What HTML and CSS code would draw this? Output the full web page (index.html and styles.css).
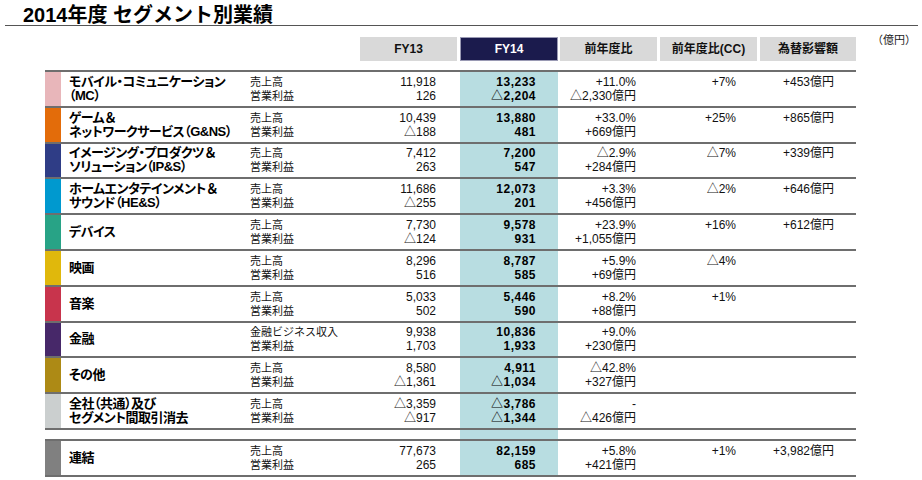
FILE: index.html
```html
<!DOCTYPE html>
<html lang="ja">
<head>
<meta charset="utf-8">
<title>2014年度 セグメント別業績</title>
<link rel="stylesheet" href="styles.css">
</head>
<body>
<div class="page">
  <div class="title-bar"><h1 class="title">2014年度 セグメント別業績</h1></div>

  <div class="head-row">
    <div class="hcell hcell-first">FY13</div>
    <div class="hcell hcell-current">FY14</div>
    <div class="hcell">前年度比</div>
    <div class="hcell">前年度比(CC)</div>
    <div class="hcell hcell-last">為替影響額</div>
    <div class="unit">（億円）</div>
  </div>

  <div class="table">
    <div class="row">
      <div class="bar bar-mc"></div>
      <div class="seg"><span>モバイル・コミュニケーション</span><span>（MC）</span></div>
      <div class="sub"><span>売上高</span><span>営業利益</span></div>
      <div class="num"><span>11,918</span><span>126</span></div>
      <div class="num cur"><span>13,233</span><span>△2,204</span></div>
      <div class="num"><span>+11.0%</span><span>△2,330億円</span></div>
      <div class="num"><span>+7%</span><span>&nbsp;</span></div>
      <div class="num fx"><span>+453億円</span><span>&nbsp;</span></div>
    </div>
    <div class="row">
      <div class="bar bar-gns"></div>
      <div class="seg"><span>ゲーム<span class="amp">＆</span></span><span>ネットワークサービス（G&amp;NS）</span></div>
      <div class="sub"><span>売上高</span><span>営業利益</span></div>
      <div class="num"><span>10,439</span><span>△188</span></div>
      <div class="num cur"><span>13,880</span><span>481</span></div>
      <div class="num"><span>+33.0%</span><span>+669億円</span></div>
      <div class="num"><span>+25%</span><span>&nbsp;</span></div>
      <div class="num fx"><span>+865億円</span><span>&nbsp;</span></div>
    </div>
    <div class="row">
      <div class="bar bar-ips"></div>
      <div class="seg"><span>イメージング・プロダクツ<span class="amp">＆</span></span><span>ソリューション（IP&amp;S）</span></div>
      <div class="sub"><span>売上高</span><span>営業利益</span></div>
      <div class="num"><span>7,412</span><span>263</span></div>
      <div class="num cur"><span>7,200</span><span>547</span></div>
      <div class="num"><span>△2.9%</span><span>+284億円</span></div>
      <div class="num"><span>△7%</span><span>&nbsp;</span></div>
      <div class="num fx"><span>+339億円</span><span>&nbsp;</span></div>
    </div>
    <div class="row">
      <div class="bar bar-hes"></div>
      <div class="seg"><span>ホームエンタテインメント<span class="amp">＆</span></span><span>サウンド（HE&amp;S）</span></div>
      <div class="sub"><span>売上高</span><span>営業利益</span></div>
      <div class="num"><span>11,686</span><span>△255</span></div>
      <div class="num cur"><span>12,073</span><span>201</span></div>
      <div class="num"><span>+3.3%</span><span>+456億円</span></div>
      <div class="num"><span>△2%</span><span>&nbsp;</span></div>
      <div class="num fx"><span>+646億円</span><span>&nbsp;</span></div>
    </div>
    <div class="row">
      <div class="bar bar-dev"></div>
      <div class="seg"><span>デバイス</span></div>
      <div class="sub"><span>売上高</span><span>営業利益</span></div>
      <div class="num"><span>7,730</span><span>△124</span></div>
      <div class="num cur"><span>9,578</span><span>931</span></div>
      <div class="num"><span>+23.9%</span><span>+1,055億円</span></div>
      <div class="num"><span>+16%</span><span>&nbsp;</span></div>
      <div class="num fx"><span>+612億円</span><span>&nbsp;</span></div>
    </div>
    <div class="row">
      <div class="bar bar-mov"></div>
      <div class="seg"><span>映画</span></div>
      <div class="sub"><span>売上高</span><span>営業利益</span></div>
      <div class="num"><span>8,296</span><span>516</span></div>
      <div class="num cur"><span>8,787</span><span>585</span></div>
      <div class="num"><span>+5.9%</span><span>+69億円</span></div>
      <div class="num"><span>△4%</span><span>&nbsp;</span></div>
      <div class="num fx"><span>&nbsp;</span><span>&nbsp;</span></div>
    </div>
    <div class="row">
      <div class="bar bar-mus"></div>
      <div class="seg"><span>音楽</span></div>
      <div class="sub"><span>売上高</span><span>営業利益</span></div>
      <div class="num"><span>5,033</span><span>502</span></div>
      <div class="num cur"><span>5,446</span><span>590</span></div>
      <div class="num"><span>+8.2%</span><span>+88億円</span></div>
      <div class="num"><span>+1%</span><span>&nbsp;</span></div>
      <div class="num fx"><span>&nbsp;</span><span>&nbsp;</span></div>
    </div>
    <div class="row">
      <div class="bar bar-fin"></div>
      <div class="seg"><span>金融</span></div>
      <div class="sub"><span>金融ビジネス収入</span><span>営業利益</span></div>
      <div class="num"><span>9,938</span><span>1,703</span></div>
      <div class="num cur"><span>10,836</span><span>1,933</span></div>
      <div class="num"><span>+9.0%</span><span>+230億円</span></div>
      <div class="num"><span>&nbsp;</span><span>&nbsp;</span></div>
      <div class="num fx"><span>&nbsp;</span><span>&nbsp;</span></div>
    </div>
    <div class="row">
      <div class="bar bar-oth"></div>
      <div class="seg"><span>その他</span></div>
      <div class="sub"><span>売上高</span><span>営業利益</span></div>
      <div class="num"><span>8,580</span><span>△1,361</span></div>
      <div class="num cur"><span>4,911</span><span>△1,034</span></div>
      <div class="num"><span>△42.8%</span><span>+327億円</span></div>
      <div class="num"><span>&nbsp;</span><span>&nbsp;</span></div>
      <div class="num fx"><span>&nbsp;</span><span>&nbsp;</span></div>
    </div>
    <div class="row row-end">
      <div class="bar bar-corp"></div>
      <div class="seg"><span>全社（共通）及び</span><span>セグメント間取引消去</span></div>
      <div class="sub"><span>売上高</span><span>営業利益</span></div>
      <div class="num"><span>△3,359</span><span>△917</span></div>
      <div class="num cur"><span>△3,786</span><span>△1,344</span></div>
      <div class="num"><span>-</span><span>△426億円</span></div>
      <div class="num"><span>&nbsp;</span><span>&nbsp;</span></div>
      <div class="num fx"><span>&nbsp;</span><span>&nbsp;</span></div>
    </div>
    <div class="spacer">
      <div class="spacer-cur"></div>
    </div>
    <div class="row row-end">
      <div class="bar bar-total"></div>
      <div class="seg"><span>連結</span></div>
      <div class="sub"><span>売上高</span><span>営業利益</span></div>
      <div class="num"><span>77,673</span><span>265</span></div>
      <div class="num cur"><span>82,159</span><span>685</span></div>
      <div class="num"><span>+5.8%</span><span>+421億円</span></div>
      <div class="num"><span>+1%</span><span>&nbsp;</span></div>
      <div class="num fx"><span>+3,982億円</span><span>&nbsp;</span></div>
    </div>
  </div>
</div>
</body>
</html>
```
FILE: styles.css
```css
html, body {
  margin: 0;
  padding: 0;
  background: #ffffff;
}

body {
  font-family: "Liberation Sans", "Noto Sans CJK JP", sans-serif;
  color: #111111;
}

.page {
  width: 922px;
  height: 480px;
  overflow: hidden;
}

/* ---------- title ---------- */
.title-bar {
  box-sizing: border-box;
  height: 26px;
  margin: 0 4px 0 5px;
  padding: 3px 0 0 18px;
  border-bottom: 1px solid #555555;
}

.title {
  margin: 0;
  font-size: 20px;
  line-height: 24px;
  font-weight: bold;
  color: #000000;
}

/* ---------- column header ---------- */
.head-row {
  display: grid;
  grid-template-columns: 100px 100px 100px 100px 96px auto;
  margin: 11px 0 0 360px;
  height: 24px;
}

.hcell {
  margin-right: 3px;
  background: #d9d9d9;
  font-size: 12px;
  font-weight: bold;
  line-height: 24px;
  text-align: center;
  color: #111111;
}

.hcell-last {
  margin-right: 0;
}

.hcell-current {
  box-sizing: border-box;
  margin-right: 2px;
  background: #1b1b4d;
  border: 1px solid #9a9ab4;
  line-height: 22px;
  color: #ffffff;
}

.unit {
  padding-left: 16px;
  margin-top: -3px;
  font-size: 11px;
  line-height: 12px;
  color: #222222;
  white-space: nowrap;
}

/* ---------- table ---------- */
.table {
  margin: 9px 0 0 45px;
  width: 811px;
}

.row {
  box-sizing: border-box;
  display: grid;
  grid-template-columns: 16px 189px 110px 100px 100px 100px 100px 96px;
  height: 35.8px;
  border-top: 2px solid #6e6e6e;
}

.row-end {
  height: 37.8px;
  border-bottom: 2px solid #6e6e6e;
}

.spacer {
  display: grid;
  grid-template-columns: 415px 98px;
  height: 9px;
}

.spacer-cur {
  grid-column: 2;
  background: #b8dde1;
}

.bar {
  height: 100%;
}

.bar-mc { background: #e8b6ba; }
.bar-gns { background: #e36c0a; }
.bar-ips { background: #2f3d86; }
.bar-hes { background: #0099cf; }
.bar-dev { background: #28a386; }
.bar-mov { background: #e0b80c; }
.bar-mus { background: #c8344c; }
.bar-fin { background: #472869; }
.bar-oth { background: #ad8a15; }
.bar-corp { background: #cbcfcf; }
.bar-total { background: #808080; }

.seg,
.sub,
.num {
  display: flex;
  flex-direction: column;
  justify-content: center;
  line-height: 14px;
  white-space: nowrap;
}

.seg {
  padding-left: 8px;
  font-size: 13px;
  font-weight: bold;
  font-feature-settings: "palt";
  letter-spacing: -0.5px;
  color: #000000;
}

.seg .amp {
  font-feature-settings: normal;
}

.sub {
  font-size: 11px;
  color: #111111;
}

.num {
  align-items: flex-end;
  padding-right: 24px;
  font-size: 12px;
  color: #111111;
}

.num.cur {
  width: 98px;
  box-sizing: border-box;
  padding-right: 22px;
  background: #b8dde1;
  font-weight: bold;
  letter-spacing: 0.5px;
  color: #000000;
}

.num.fx {
  padding-right: 22px;
}
```
